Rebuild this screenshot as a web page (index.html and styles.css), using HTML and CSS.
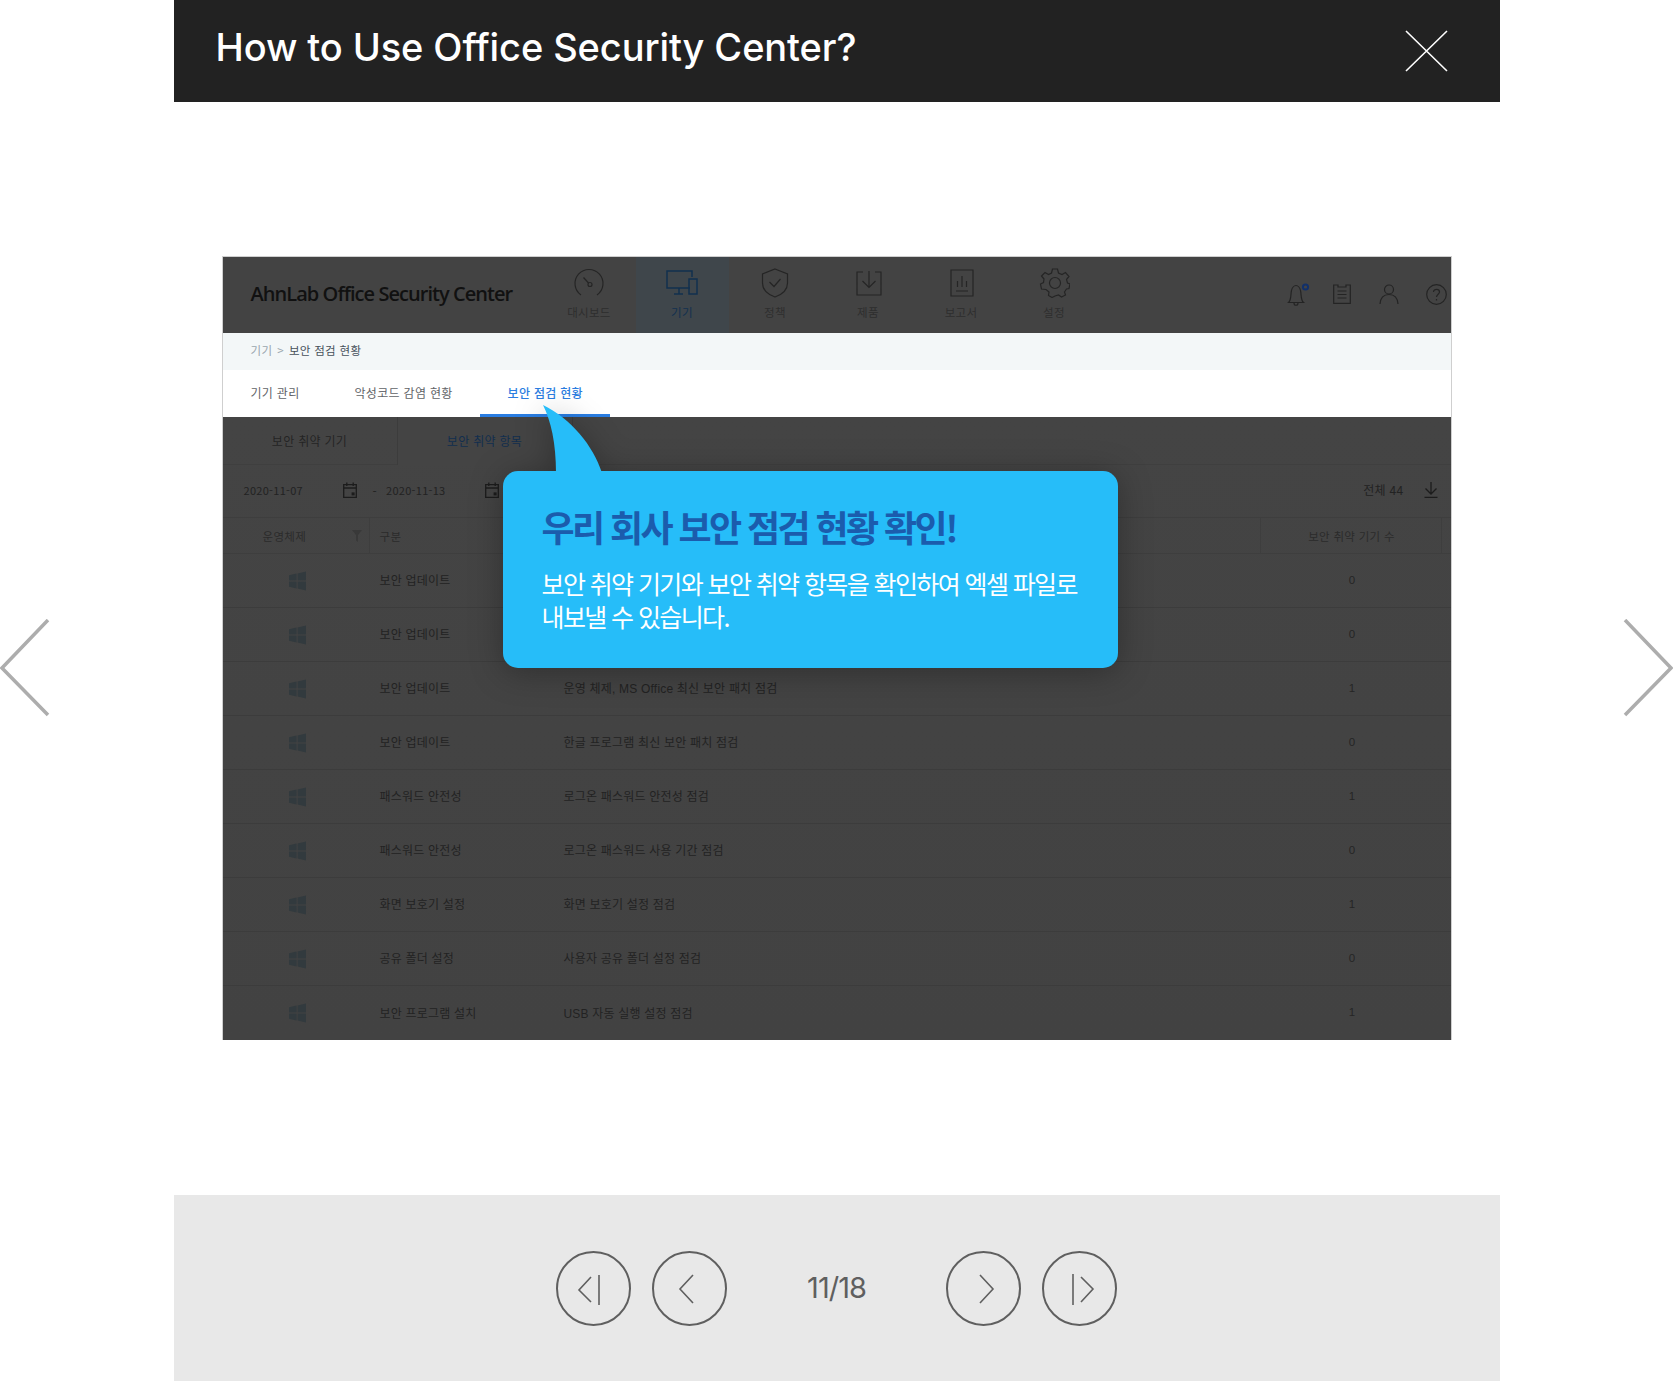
FILE: index.html
```html
<!DOCTYPE html>
<html lang="ko">
<head>
    <meta charset="UTF-8">
    <meta name="viewport" content="width=device-width, initial-scale=1.0">
    <title>How to Use Office Security Center?</title>
    <link rel="stylesheet" href="styles.css">
</head>
<body>
    <svg class="sprites" width="0" height="0" aria-hidden="true">
        <symbol id="win" viewBox="0 0 17 20">
            <path d="M0 4.2 7.6 2.6V9.4H0ZM8.6 2.4 17 .4V9.4H8.6ZM0 10.4H7.6V17.4L0 15.8ZM8.6 10.4H17V19.6L8.6 17.6Z"/>
        </symbol>
        <symbol id="cal" viewBox="0 0 14 16">
            <path d="M.7 2.7H13.3V15.3H.7ZM.7 6H13.3M3.8.5V4M10.2.5V4" fill="none" stroke="currentColor" stroke-width="1.3"/>
            <rect x="8.6" y="10.4" width="3" height="3" fill="currentColor"/>
        </symbol>
    </svg>

    <a class="side-arrow side-prev" href="#" aria-label="Previous">
        <svg viewBox="0 0 50 98" width="50" height="98"><path d="M48 1 2 49 48 96"/></svg>
    </a>
    <a class="side-arrow side-next" href="#" aria-label="Next">
        <svg viewBox="0 0 50 98" width="50" height="98"><path d="M2 1 48 49 2 96"/></svg>
    </a>

    <div class="modal">
        <header class="modal-head">
            <h1>How to Use Office Security Center?</h1>
            <a class="close-btn" href="#" aria-label="Close">
                <svg viewBox="0 0 44 42" width="44" height="42"><path d="M2 1 43 41M43 1 2 41"/></svg>
            </a>
        </header>

        <main class="modal-body">
            <div class="screen">
                <div class="topbar">
                    <div class="brand">AhnLab Office Security Center</div>
                    <nav class="nav">
                        <div class="nav-item">
                            <svg viewBox="0 0 32 30" width="32" height="30"><path d="M8 27A14 14 0 1 1 24 27"/><path d="M10.500 9.500 15.500 15"/><circle cx="17" cy="16.500" r="2"/></svg>
                            <span>대시보드</span>
                        </div>
                        <div class="nav-item active">
                            <svg viewBox="0 0 32 30" width="32" height="30"><path d="M24 20H1V3H26V9M8 26H17M13 20V26"/><rect x="23" y="11" width="8" height="15"/></svg>
                            <span>기기</span>
                        </div>
                        <div class="nav-item">
                            <svg viewBox="0 0 32 30" width="32" height="30"><path d="M16 1 28.500 6V15C28.500 22 23 26.500 16 29 9 26.500 3.500 22 3.500 15V6Z"/><path d="M10.500 14 15 18.500 21.500 11"/></svg>
                            <span>정책</span>
                        </div>
                        <div class="nav-item">
                            <svg viewBox="0 0 32 30" width="32" height="30"><path d="M11 4H5V27H29V4H23M17 3V19M10.500 13 17 19.500 23.500 13"/></svg>
                            <span>제품</span>
                        </div>
                        <div class="nav-item">
                            <svg viewBox="0 0 32 30" width="32" height="30"><path d="M6 2H28V28H6ZM11 23H23M12.500 19V13M17 19V8M21.500 19V13"/></svg>
                            <span>보고서</span>
                        </div>
                        <div class="nav-item">
                            <svg viewBox="0 0 32 30" width="32" height="30"><path d="M14.500 1H19.500L20.500 5 24 6.500 27.500 4.500 31 8.500 28.500 11.500 29.500 15 32 16 31 20.500 28.500 21 26.500 24 27.500 27 23.500 29 20.500 27 17 28 14 29.500 10.500 27.500 11 24 8 21.500 3.500 21 2.500 16 5.500 14.500 6 11 3.500 8 7 4.500 10.500 6.500 13.500 5Z"/><circle cx="17" cy="15" r="5.500"/></svg>
                            <span>설정</span>
                        </div>
                    </nav>
                    <div class="util">
                        <svg viewBox="0 0 24 26" width="24" height="26"><path d="M1.500 21.500C4.500 19 3.500 13.500 4.500 9.500 5 7 7 4.500 9 4.500S13 7 13.500 9.500C14.500 13.500 13.500 19 16.500 21.500ZM7 22C7 25 11 25 11 22"/><circle class="dot" cx="18.500" cy="6" r="2.600"/></svg>
                        <svg class="u-clip" viewBox="0 0 18 20" width="18" height="20"><path d="M.7 1H5V3H13V1H17.300V19.300H.7ZM4.500 7H13.500M4.500 10.500H13.500M4.500 14H13.500"/></svg>
                        <svg class="u-user" viewBox="0 0 20 20" width="20" height="20"><circle cx="10" cy="5.500" r="4.500"/><path d="M1 20C1.500 13 5 10.500 10 10.500S18.500 13 19 20"/></svg>
                        <svg class="u-help" viewBox="0 0 21 21" width="21" height="21"><circle cx="10.500" cy="10.500" r="9.800"/><path d="M7.500 8C7.500 4.500 13.500 4.500 13.500 8 13.500 10 10.500 10.500 10.500 13M10.500 15V16.500"/></svg>
                    </div>
                </div>

                <div class="crumbs"><span class="crumb-root">기기</span><span class="crumb-sep">&gt;</span><span>보안 점검 현황</span></div>

                <div class="tabs">
                    <div class="tab">기기 관리</div>
                    <div class="tab">악성코드 감염 현황</div>
                    <div class="tab selected">보안 점검 현황</div>
                </div>

                <div class="dimmed">
                    <div class="subtabs">
                        <div class="subtab">보안 취약 기기</div>
                        <div class="subtab on">보안 취약 항목</div>
                    </div>

                    <div class="filters">
                        <span class="date">2020-11-07</span>
                        <svg class="cal" width="14" height="16"><use href="#cal"/></svg>
                        <span class="dash">-</span>
                        <span class="date">2020-11-13</span>
                        <svg class="cal" width="14" height="16"><use href="#cal"/></svg>
                        <span class="total">전체 44</span>
                        <svg class="export" viewBox="0 0 14 16" width="14" height="16"><path d="M7 0V12M1.500 6.500 7 12 12.500 6.500M.500 15.300H13.500"/></svg>
                    </div>

                    <div class="grid thead">
                        <div class="th-os">운영체제<svg viewBox="0 0 10 12" width="10" height="12"><path d="M0 0H10L6 5V12L4 10.500V5Z"/></svg></div>
                        <div class="th-type">구분</div>
                        <div class="th-count">보안 취약 기기 수</div>
                    </div>

                    <div class="grid row">
                        <svg class="os" width="17" height="20"><use href="#win"/></svg>
                        <div>보안 업데이트</div><div></div><div class="num">0</div>
                    </div>
                    <div class="grid row">
                        <svg class="os" width="17" height="20"><use href="#win"/></svg>
                        <div>보안 업데이트</div><div></div><div class="num">0</div>
                    </div>
                    <div class="grid row">
                        <svg class="os" width="17" height="20"><use href="#win"/></svg>
                        <div>보안 업데이트</div><div>운영 체제, MS Office 최신 보안 패치 점검</div><div class="num">1</div>
                    </div>
                    <div class="grid row">
                        <svg class="os" width="17" height="20"><use href="#win"/></svg>
                        <div>보안 업데이트</div><div>한글 프로그램 최신 보안 패치 점검</div><div class="num">0</div>
                    </div>
                    <div class="grid row">
                        <svg class="os" width="17" height="20"><use href="#win"/></svg>
                        <div>패스워드 안전성</div><div>로그온 패스워드 안전성 점검</div><div class="num">1</div>
                    </div>
                    <div class="grid row">
                        <svg class="os" width="17" height="20"><use href="#win"/></svg>
                        <div>패스워드 안전성</div><div>로그온 패스워드 사용 기간 점검</div><div class="num">0</div>
                    </div>
                    <div class="grid row">
                        <svg class="os" width="17" height="20"><use href="#win"/></svg>
                        <div>화면 보호기 설정</div><div>화면 보호기 설정 점검</div><div class="num">1</div>
                    </div>
                    <div class="grid row">
                        <svg class="os" width="17" height="20"><use href="#win"/></svg>
                        <div>공유 폴더 설정</div><div>사용자 공유 폴더 설정 점검</div><div class="num">0</div>
                    </div>
                    <div class="grid row">
                        <svg class="os" width="17" height="20"><use href="#win"/></svg>
                        <div>보안 프로그램 설치</div><div>USB 자동 실행 설정 점검</div><div class="num">1</div>
                    </div>
                </div>

                <div class="callout">
                    <svg class="callout-tail" viewBox="0 0 60 68" width="60" height="68"><path d="M0 0C8 16 13 38 13 68H59C50 40 28 14 0 0Z"/></svg>
                    <h2>우리 회사 보안 점검 현황 확인!</h2>
                    <p>보안 취약 기기와 보안 취약 항목을 확인하여 엑셀 파일로<br>내보낼 수 있습니다.</p>
                </div>
            </div>
        </main>

        <footer class="pager">
            <div class="pager-group">
                <a class="round-btn" href="#" aria-label="First">
                    <svg viewBox="0 0 74 74" width="74" height="74"><path d="M35 26 23 39 35 51M43 24V54"/></svg>
                </a>
                <a class="round-btn" href="#" aria-label="Previous">
                    <svg viewBox="0 0 74 74" width="74" height="74"><path d="M41 24 28 38 41 52"/></svg>
                </a>
            </div>
            <div class="count">11/18</div>
            <div class="pager-group">
                <a class="round-btn" href="#" aria-label="Next">
                    <svg viewBox="0 0 74 74" width="74" height="74"><path d="M34 24 47 38 34 52"/></svg>
                </a>
                <a class="round-btn" href="#" aria-label="Last">
                    <svg viewBox="0 0 74 74" width="74" height="74"><path d="M31 23V54M39 26 51 38 39 51"/></svg>
                </a>
            </div>
        </footer>
    </div>
</body>
</html>
```

FILE: styles.css
```css
* {
    margin: 0;
    padding: 0;
    box-sizing: border-box;
}

html {
    height: 1381px;
    overflow: hidden;
}

body {
    background: #fff;
    font-family: "Noto Sans CJK KR", "Noto Sans", sans-serif;
    height: 1381px;
    overflow: hidden;
    position: relative;
}

.sprites {
    position: absolute;
}

.side-arrow {
    position: absolute;
    top: 619px;
}

.side-arrow svg {
    display: block;
}

.side-arrow path {
    fill: none;
    stroke: #adadad;
    stroke-width: 3.5;
}

.side-prev {
    left: 0;
}

.side-next {
    right: 0;
}

.modal {
    width: 1326px;
    height: 1381px;
    margin: 0 auto;
    display: flex;
    flex-direction: column;
}

.modal-head {
    height: 102px;
    background: #222;
    display: flex;
    align-items: flex-start;
    justify-content: space-between;
    padding: 0 52px 0 42px;
}

.modal-head h1 {
    color: #fff;
    font-family: Inter, sans-serif;
    font-size: 38px;
    font-weight: 500;
    line-height: 94px;
    letter-spacing: -0.1px;
}

.close-btn {
    margin-top: 30px;
}

.close-btn svg {
    display: block;
}

.close-btn path {
    fill: none;
    stroke: #fff;
    stroke-width: 1.6;
}

.modal-body {
    flex: 1;
    display: flex;
    justify-content: center;
    align-items: flex-start;
    padding-top: 154px;
}

/* the app capture */
.screen {
    width: 1230px;
    height: 784px;
    border: 1px solid #cfcfcf;
    position: relative;
    background: #434343;
    color: #222;
    font-size: 12px;
    letter-spacing: 0.3px;
}

.topbar {
    height: 76px;
    background: #434343;
    display: flex;
}

.brand {
    width: 320px;
    padding-left: 28px;
    font-family: "Open Sans", sans-serif;
    font-size: 20px;
    font-weight: 600;
    letter-spacing: -0.95px;
    line-height: 74px;
    color: #111;
}

.nav {
    display: flex;
}

.nav-item {
    width: 93px;
    padding-top: 11px;
    display: flex;
    flex-direction: column;
    align-items: center;
    gap: 7px;
    font-size: 11.500px;
    line-height: 15px;
    color: #2e2e2e;
}

.nav-item svg {
    display: block;
}

.nav-item path,
.nav-item circle,
.nav-item rect {
    fill: none;
    stroke: #252525;
    stroke-width: 1.2;
}

.nav-item.active {
    background: #3f464b;
    color: #12304f;
}

.nav-item.active path,
.nav-item.active rect {
    stroke: #12304f;
    stroke-width: 1.5;
}

.util {
    margin-left: auto;
    display: flex;
    align-items: center;
    padding: 0 4px 2px 0;
}

.util path,
.util circle {
    fill: none;
    stroke: #242424;
    stroke-width: 1.2;
}

.util .dot {
    stroke: #12306a;
    stroke-width: 2;
}

.u-clip {
    margin-left: 22px;
}

.u-user {
    margin-left: 28px;
}

.u-help {
    margin-left: 26.5px;
}

.crumbs {
    height: 37px;
    background: #f3f7f8;
    padding: 0 0 4px 28px;
    display: flex;
    align-items: center;
    gap: 5px;
    color: #46505a;
    font-size: 11.500px;
}

.crumb-root,
.crumb-sep {
    color: #9aa6ae;
}

.tabs {
    height: 47px;
    background: #fff;
    display: flex;
}

.tab {
    padding: 0 27.500px;
    line-height: 46px;
    color: #5f6367;
    font-size: 12px;
}

.tab:first-child {
    padding-left: 28px;
}

.tab.selected {
    color: #2a7de1;
    font-weight: 500;
    border-bottom: 3px solid #2a7de1;
}

.dimmed {
    background: linear-gradient(#444, #424242);
}

.subtabs {
    height: 48px;
    display: flex;
    border-bottom: 1px solid #3f3f3f;
}

.subtab {
    width: 175px;
    text-align: center;
    line-height: 48px;
    border-right: 1px solid #3c3c3c;
    margin-bottom: -1px;
    color: #242424;
}

.subtab.on {
    background: #444;
    color: #122e4e;
}

.filters {
    height: 53px;
    padding: 0 13px 2px 21px;
    display: flex;
    align-items: center;
    border-bottom: 1px solid #3e3e3e;
}

.date {
    width: 98px;
    font-size: 11px;
}

.cal {
    color: #1c1c1c;
    margin-left: 1px;
}

.dash {
    margin: 0 9px 0 16px;
}

.total {
    margin: 0 20px 2px auto;
}

.export path {
    fill: none;
    stroke: #1c1c1c;
    stroke-width: 1.3;
}

.grid {
    display: grid;
    grid-template-columns: 147px 194px 696px 182px 1fr;
    align-items: center;
}

.thead {
    height: 36px;
    border-bottom: 1px solid #3e3e3e;
    color: #2b2b2b;
    font-size: 11.500px;
    grid-template-columns: 147px 890px 182px 1fr;
}

.th-os {
    height: 100%;
    display: flex;
    align-items: center;
    padding-left: 40px;
    border-right: 1px solid #3e3e3e;
}

.th-os svg {
    margin-left: 46px;
    fill: #393939;
}

.th-type {
    padding-left: 10px;
}

.th-count {
    height: 100%;
    line-height: 36px;
    text-align: center;
    padding-left: 2px;
    border: solid #3e3e3e;
    border-width: 0 1px;
}

.row {
    height: 54px;
    border-bottom: 1px solid #3c3c3c;
    padding-bottom: 2px;
    font-family: "Liberation Sans", "Noto Sans CJK KR", sans-serif;
    letter-spacing: 0.2px;
}

.row:last-child {
    border-bottom: 0;
}

.row > div:nth-of-type(1) {
    padding-left: 10px;
}

.os {
    justify-self: center;
    fill: #323a3e;
    margin: 2px 0 0 2px;
}

.num {
    grid-column: 4;
    text-align: center;
    padding-left: 3px;
    font-size: 11.500px;
    color: #252525;
}

/* speech bubble over the capture */
.callout {
    position: absolute;
    left: 280px;
    top: 214px;
    width: 615px;
    height: 197px;
    background: #26bdf9;
    border-radius: 15px;
    padding: 31px 0 0 39px;
    color: #fff;
    letter-spacing: 0;
    filter: drop-shadow(0 4px 16px rgba(0, 0, 0, 0.3));
}

.callout-tail {
    position: absolute;
    left: 40px;
    top: -66px;
    fill: #26bdf9;
}

.callout h2 {
    color: #1b5cad;
    font-size: 36px;
    font-weight: 700;
    letter-spacing: -2.6px;
    line-height: 48px;
}

.callout p {
    margin-top: 17px;
    font-size: 25px;
    font-weight: 400;
    letter-spacing: -1.600px;
    line-height: 33px;
}

.pager {
    height: 186px;
    background: #e8e8e8;
    display: flex;
    align-items: center;
    justify-content: center;
}

.pager-group {
    display: flex;
    gap: 21px;
}

.round-btn {
    width: 75px;
    height: 75px;
    border: 2.5px solid #5f5f5f;
    border-radius: 50%;
    display: block;
    position: relative;
}

.round-btn svg {
    position: absolute;
    left: -2px;
    top: -2px;
}

.round-btn path {
    fill: none;
    stroke: #5f5f5f;
    stroke-width: 1.6;
}

.count {
    width: 219px;
    text-align: center;
    font-family: Inter, sans-serif;
    font-size: 29px;
    letter-spacing: -1px;
    color: #5f5f5f;
    padding-bottom: 2px;
}
```
